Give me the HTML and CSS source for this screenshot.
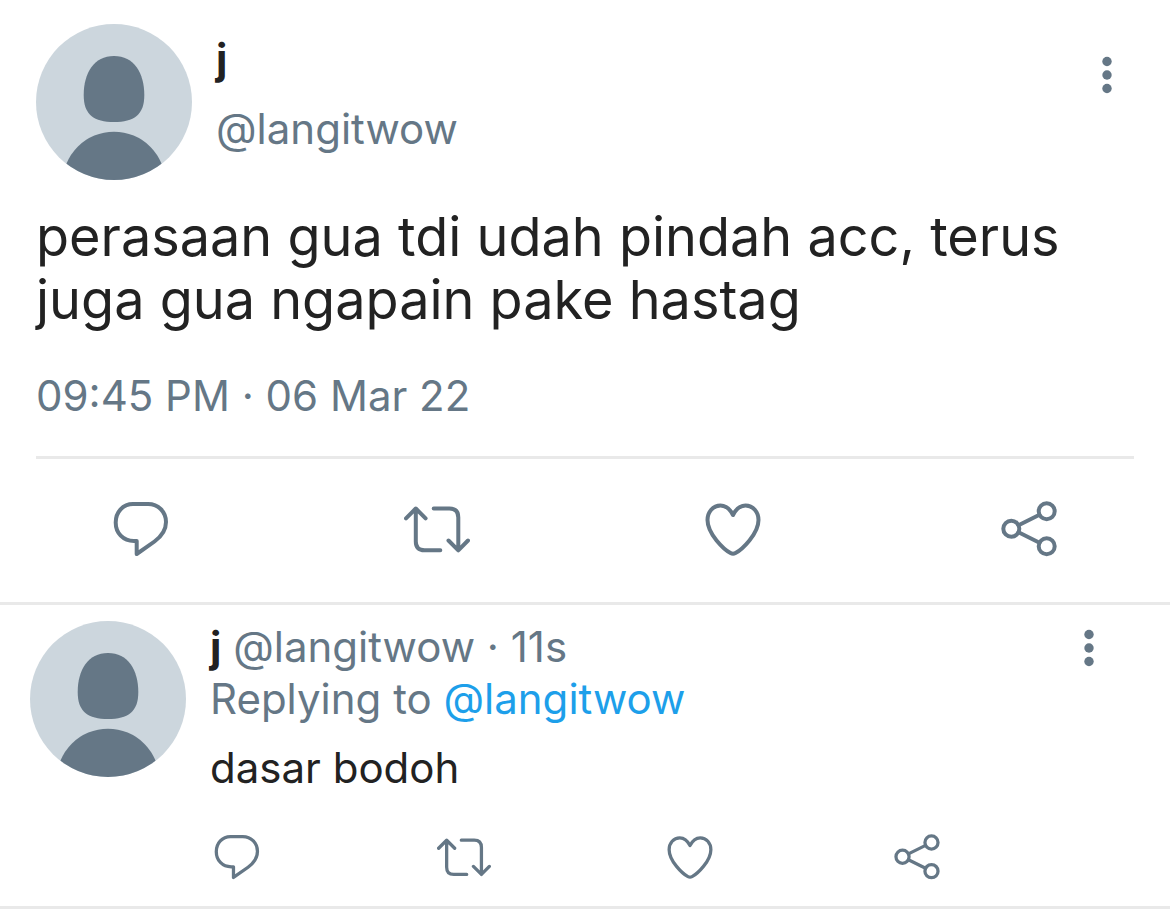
FILE: index.html
```
<!DOCTYPE html>
<html lang="id">
<head>
    <meta charset="UTF-8">
    <meta name="viewport" content="width=device-width, initial-scale=1.0">
    <title>Tweet</title>
    <link rel="stylesheet" href="styles.css">
</head>
<body>

    <svg class="sprite" aria-hidden="true">
        <symbol id="avatar" viewBox="0 0 156 156">
            <path fill="#657786" d="M78 32C98 32 108.3 49 108.3 71C108.3 91 98 98 78 98C58 98 47.7 91 47.7 71C47.7 49 58 32 78 32Z"/>
            <circle cx="78" cy="159" r="51.3" fill="#657786"/>
        </symbol>
        <symbol id="comment" viewBox="0 0 66 66">
            <path d="M25 8H40C50.5 8 58 16 58 26C58 34 54 40 46.5 45.5L28.7 58V45H26C15 45 7.7 37 7.7 26.5C7.7 16 15 8 25 8Z"/>
        </symbol>
        <symbol id="retweet" viewBox="0 0 66 66">
            <path d="M2 22.3L11.8 12.5L21.6 22.3M11.8 12.5V45.5Q11.8 54.3 20.5 54.3H36.3M29.7 12.5H45.5Q54.3 12.5 54.3 21.5V54.3M44.5 44.5L54.3 54.3L64 44.5"/>
        </symbol>
        <symbol id="heart" viewBox="0 0 66 66">
            <path d="M33 19C30 13 26 9.5 20.5 9.5C13 9.5 7.5 16 7.5 24C7.5 38 24 53.5 30.5 57Q33 58.3 35.5 57C42 53.5 58.5 38 58.5 24C58.5 16 53 9.5 45.5 9.5C40 9.5 36 13 33 19Z"/>
        </symbol>
        <symbol id="share" viewBox="0 0 66 66">
            <circle cx="15.3" cy="32.7" r="8"/>
            <circle cx="50.7" cy="15.3" r="8"/>
            <circle cx="50.7" cy="50.3" r="8"/>
            <path d="M22.5 29.2L43.5 18.8M22.5 36.3L43.5 46.7"/>
        </symbol>
        <symbol id="more" viewBox="0 0 12 40">
            <circle cx="6" cy="6.5" r="4.7"/>
            <circle cx="6" cy="20" r="4.7"/>
            <circle cx="6" cy="33.5" r="4.7"/>
        </symbol>
    </svg>

    <article class="tweet">
        <header class="head">
            <svg class="avatar"><use href="#avatar"/></svg>
            <div class="names">
                <div class="name">j</div>
                <div class="handle">@langitwow</div>
            </div>
            <button class="more" aria-label="More"><svg><use href="#more"/></svg></button>
        </header>

        <p class="text">perasaan gua tdi udah pindah acc, terus juga gua ngapain pake hastag</p>
        <p class="time">09:45 PM · 06 Mar 22</p>

        <div class="actions">
            <button aria-label="Reply"><svg><use href="#comment"/></svg></button>
            <button aria-label="Retweet"><svg><use href="#retweet"/></svg></button>
            <button aria-label="Like"><svg><use href="#heart"/></svg></button>
            <button aria-label="Share"><svg><use href="#share"/></svg></button>
        </div>
    </article>

    <article class="reply">
        <svg class="avatar"><use href="#avatar"/></svg>
        <div class="body">
            <div class="meta">
                <p><span class="name">j</span> @langitwow · 11s</p>
                <button class="more" aria-label="More"><svg><use href="#more"/></svg></button>
            </div>
            <p class="replying">Replying to <a href="#">@langitwow</a></p>
            <p class="reply-text">dasar bodoh</p>

            <div class="actions">
                <button aria-label="Reply"><svg><use href="#comment"/></svg></button>
                <button aria-label="Retweet"><svg><use href="#retweet"/></svg></button>
                <button aria-label="Like"><svg><use href="#heart"/></svg></button>
                <button aria-label="Share"><svg><use href="#share"/></svg></button>
            </div>
        </div>
    </article>

</body>
</html>
```
FILE: styles.css
```
* {
    margin: 0;
    padding: 0;
    box-sizing: border-box;
}

body {
    background-color: #fff;
    color: #222;
    font-family: Inter, "Liberation Sans", sans-serif;
    font-size: 42px;
    line-height: 52px;
}

.sprite {
    display: none;
}

button {
    background: none;
    border: none;
    color: #657786;
    cursor: pointer;
}

button svg {
    display: block;
}

a {
    color: #1d9fea;
    text-decoration: none;
}

.avatar {
    width: 156px;
    height: 156px;
    flex-shrink: 0;
    border-radius: 50%;
    background-color: #ccd6dd;
    overflow: hidden;
}

.name {
    color: #222;
    font-weight: 700;
}

.more svg {
    width: 12px;
    height: 40px;
    fill: currentColor;
}

.actions {
    display: flex;
    justify-content: space-between;
}

.actions svg {
    width: 66px;
    height: 66px;
    fill: none;
    stroke: currentColor;
    stroke-width: 4;
    stroke-linecap: round;
    stroke-linejoin: round;
}

/* main tweet */

.tweet {
    padding: 24px 36px 0;
    border-bottom: 3px solid #e9e9e9;
}

.head {
    display: flex;
    align-items: flex-start;
}

.names {
    flex: 1;
    padding-left: 24px;
    line-height: 70px;
}

.handle,
.time,
.meta,
.replying {
    color: #657786;
}

.head .more {
    padding: 31px 21px 0 0;
}

.text {
    margin-top: 25px;
    font-size: 54px;
    line-height: 63px;
}

.time {
    margin-top: 39px;
}

.tweet .actions {
    margin-top: 34px;
    padding: 37px 72px 40px;
    border-top: 3px solid #e9e9e9;
}

/* reply */

.reply {
    display: flex;
    padding: 16px 30px 0;
    border-bottom: 3px solid #e9e9e9;
}

.body {
    flex: 1;
    padding-left: 24px;
}

.meta {
    display: flex;
    align-items: flex-start;
    justify-content: space-between;
}

.meta .more {
    padding: 7px 45px 0 0;
}

.reply-text {
    margin-top: 17px;
}

.reply .actions {
    margin-top: 36px;
    padding: 0 196px 22px 0;
}

.reply .actions svg {
    width: 54px;
    height: 54px;
}
```
